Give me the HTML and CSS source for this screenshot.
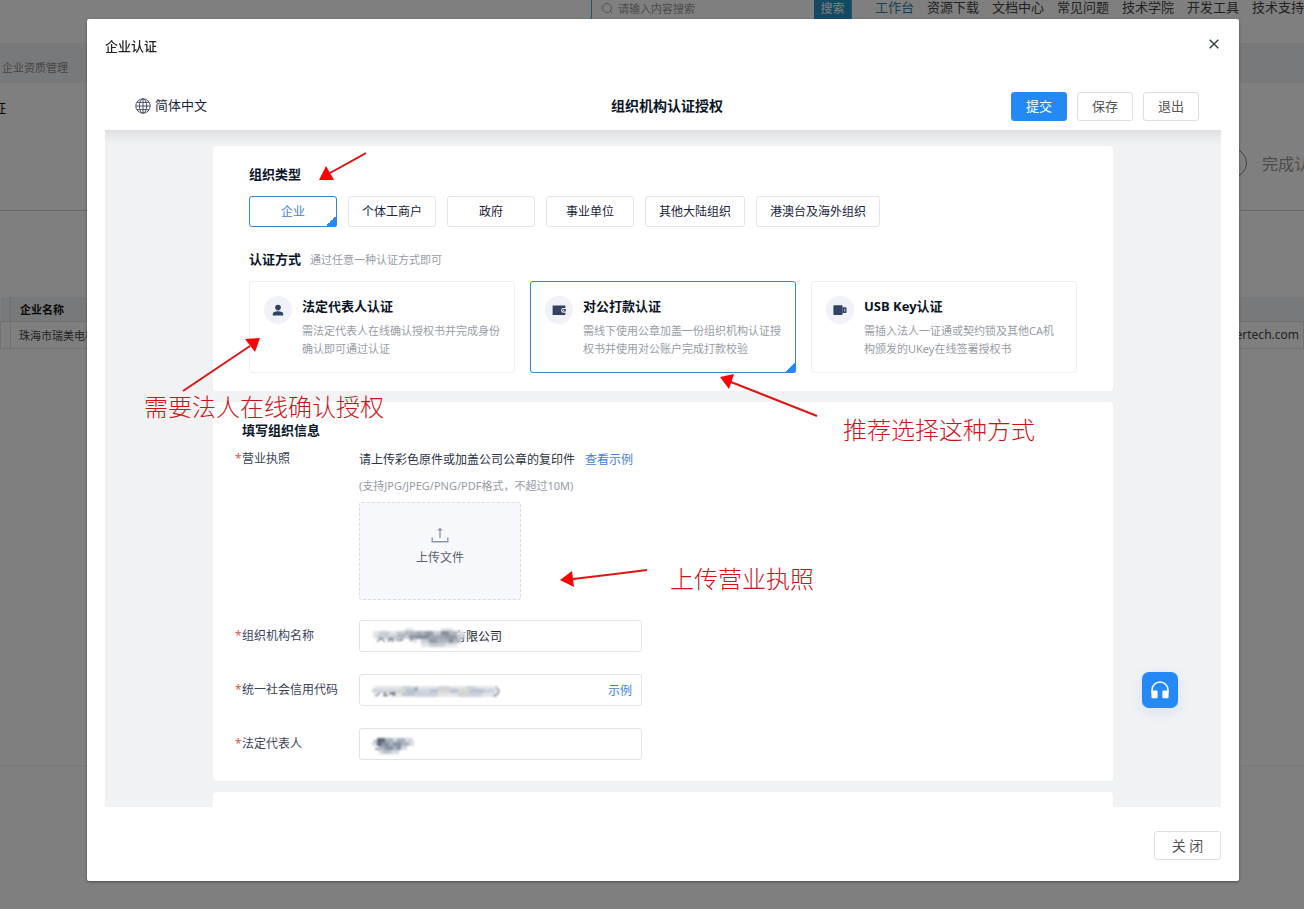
FILE: index.html
```html
<!DOCTYPE html>
<html lang="zh-CN">
<head>
<meta charset="utf-8">
<meta name="viewport" content="width=device-width, initial-scale=1">
<title>企业认证</title>
<link rel="stylesheet" href="styles.css">
</head>
<body>
<div class="page">
  <header class="site-header">
    <form class="search">
      <svg class="search-icon" viewBox="0 0 12 12" width="12" height="12" fill="none" stroke="#aaa"><circle cx="6" cy="6" r="4.5"/><path d="M9 9l2 2"/></svg>
      <input class="search-input" type="text" placeholder="请输入内容搜索" aria-label="搜索内容">
      <button class="search-btn" type="button">搜索</button>
    </form>
    <nav class="site-nav">
      <a class="nav-link nav-link-active" href="#">工作台</a>
      <a class="nav-link" href="#">资源下载</a>
      <a class="nav-link" href="#">文档中心</a>
      <a class="nav-link" href="#">常见问题</a>
      <a class="nav-link" href="#">技术学院</a>
      <a class="nav-link" href="#">开发工具</a>
      <a class="nav-link" href="#">技术支持</a>
    </nav>
  </header>
  <div class="crumbs">企业资质管理</div>
  <section class="progress">
    <h2 class="progress-title">证</h2>
    <div class="step"><span class="step-dot"></span><span>完成认证</span></div>
  </section>
  <table class="list">
    <thead><tr><th class="col-index"></th><th>企业名称</th><th></th></tr></thead>
    <tbody><tr><td class="col-index"></td><td>珠海市瑞美电机</td><td class="col-mail">nertech.com</td></tr></tbody>
  </table>
  <footer class="site-footer"></footer>
</div>

<div class="overlay">
  <div class="modal" role="dialog" aria-labelledby="modal-title">
    <header class="modal-header">
      <h1 class="modal-title" id="modal-title">企业认证</h1>
      <button class="modal-close" type="button" aria-label="关闭窗口">
        <svg viewBox="0 0 10 10" width="10" height="10" fill="none" stroke="#333a45" stroke-width="1.4"><path d="M.7.7l8.6 8.6M9.3.7L.7 9.3"/></svg>
      </button>
    </header>

    <div class="frame">
      <div class="topbar">
        <button class="lang" type="button">
          <svg viewBox="0 0 16 16" width="16" height="16" fill="none" stroke="#4a5568"><circle cx="8" cy="8" r="7.2"/><ellipse cx="8" cy="8" rx="3.6" ry="7.2"/><path d="M8 .8v14.4M.8 8h14.4M2 4.4h12M2 11.6h12"/></svg>
          <span>简体中文</span>
        </button>
        <h2 class="topbar-title">组织机构认证授权</h2>
        <div class="actions">
          <button class="btn btn-primary" type="button">提交</button>
          <button class="btn" type="button">保存</button>
          <button class="btn" type="button">退出</button>
        </div>
      </div>

      <div class="scroll">
        <form class="column">
          <section class="card card-choice">
            <h3 class="heading">组织类型</h3>
            <div class="types">
              <label class="choice type"><input class="choice-input" type="radio" name="type" checked>企业</label>
              <label class="choice type"><input class="choice-input" type="radio" name="type">个体工商户</label>
              <label class="choice type"><input class="choice-input" type="radio" name="type">政府</label>
              <label class="choice type"><input class="choice-input" type="radio" name="type">事业单位</label>
              <label class="choice type"><input class="choice-input" type="radio" name="type">其他大陆组织</label>
              <label class="choice type"><input class="choice-input" type="radio" name="type">港澳台及海外组织</label>
            </div>
            <div class="method-head">
              <h3 class="heading">认证方式</h3>
              <span class="note">通过任意一种认证方式即可</span>
            </div>
            <div class="methods">
              <label class="choice method">
                <input class="choice-input" type="radio" name="method">
                <span class="method-icon"><svg viewBox="0 0 14 14" width="14" height="14" fill="#334260"><circle cx="7" cy="4.6" r="2.8"/><path d="M1.8 12.6v-1.4c0-2 1.8-2.9 5.2-2.9s5.2.9 5.2 2.9v1.4z"/></svg></span>
                <span class="method-text"><strong class="method-name">法定代表人认证</strong><span class="method-desc">需法定代表人在线确认授权书并完成身份确认即可通过认证</span></span>
              </label>
              <label class="choice method">
                <input class="choice-input" type="radio" name="method" checked>
                <span class="method-icon"><svg viewBox="0 0 14 14" width="14" height="14"><path fill="#334260" d="M.6 2.4h12a.8.8 0 0 1 .8.8v1.9h-2a2.3 2.3 0 0 0 0 4.6h2v1.6a.8.8 0 0 1-.8.8H.6z"/><path fill="#334260" d="M11.4 6.1h2.4v2.5h-2.4a1.25 1.25 0 0 1 0-2.5z"/><circle cx="11.6" cy="7.4" r=".6" fill="#fff"/></svg></span>
                <span class="method-text"><strong class="method-name">对公打款认证</strong><span class="method-desc">需线下使用公章加盖一份组织机构认证授权书并使用对公账户完成打款校验</span></span>
              </label>
              <label class="choice method">
                <input class="choice-input" type="radio" name="method">
                <span class="method-icon"><svg viewBox="0 0 14 14" width="14" height="14"><path fill="#334260" d="M1.2 2.2h7.6a.8.8 0 0 1 .8.8v8.2a.8.8 0 0 1-.8.8H1.2a.8.8 0 0 1-.8-.8V3a.8.8 0 0 1 .8-.8z"/><path fill="#334260" d="M9.6 4.2h3.2a.7.7 0 0 1 .7.7v4.4a.7.7 0 0 1-.7.7H9.6z"/><path fill="#dfe3ec" d="M11.4 5.8h.8v2.6h-.8z"/></svg></span>
                <span class="method-text"><strong class="method-name">USB Key认证</strong><span class="method-desc">需插入法人一证通或契约锁及其他CA机构颁发的UKey在线签署授权书</span></span>
              </label>
            </div>
          </section>

          <section class="card card-info">
            <h3 class="heading info-heading">填写组织信息</h3>
            <div class="row row-upload">
              <label class="label" for="license"><span class="star">*</span>营业执照</label>
              <div class="upload-area">
                <p class="hint">请上传彩色原件或加盖公司公章的复印件<a class="link hint-link" href="#">查看示例</a></p>
                <p class="note">(支持JPG/JPEG/PNG/PDF格式，不超过10M)</p>
                <button class="upload" id="license" type="button">
                  <svg viewBox="0 0 18 18" width="18" height="18" fill="none" stroke="#8f99a8" stroke-width="1.4"><path d="M1.2 11.5v4.2h15.6v-4.2M9 12V3"/><path d="M6.2 4.6L9 1.4l2.8 3.2z" fill="#8f99a8" stroke="none"/></svg>
                  <span>上传文件</span>
                </button>
              </div>
            </div>
            <div class="row">
              <label class="label" for="org"><span class="star">*</span>组织机构名称</label>
              <div class="field">
                <input class="field-input field-input-masked" id="org" type="text" value="有限公司">
                <svg class="mask" viewBox="0 0 96 20" width="96" height="20" fill="none" stroke-width="4">
                  <path stroke="#e2e4e8" d="M1 6h16M1 10h6M17 6h8M33 3h8M69 3h12M85 6h8M49 18h8M73 18h12M41 14h4"/>
                  <path stroke="#c9ccd3" d="M7 6h10M5 10h12M25 6h8M17 10h8M33 10h4M61 6h8M49 14h8M57 18h16M85 10h8"/>
                  <path stroke="#222d40" stroke-width="1" d="M5 15l4-4M9 11l4 4M17 15v-3h4v3M24 13h5M30 10v4M38 14l4-3"/>
                  <path stroke="#b1b6c0" d="M25 9h8M33 6h12M77 6h8M65 14h12M81 14h8M49 6h4"/>
                  <path stroke="#929aa8" d="M37 10h8M53 6h8M57 14h8M73 10h12"/>
                  <path stroke="#858e9c" d="M45 10h12M69 6h8M77 14h4"/>
                  <path stroke="#a1a8b3" d="M57 10h16M45 6h4"/>
                </svg>
              </div>
            </div>
            <div class="row">
              <label class="label" for="code"><span class="star">*</span>统一社会信用代码</label>
              <div class="field">
                <input class="field-input" id="code" type="text">
                <a class="link" href="#">示例</a>
                <svg class="mask" viewBox="0 0 132 20" width="132" height="20" fill="none" stroke-width="4">
                  <path stroke="#e3e5e9" d="M2 7h120M18 14h106"/>
                  <path stroke="#ced4dd" d="M0 10h12M18 10h8M30 7h12M46 10h12M42 14h24M66 7h12M86 14h24M94 7h10M110 10h14"/>
                  <path stroke="#b9c3d0" d="M30 13h12M34 10h12M58 10h8M78 10h8M98 10h14"/>
                  <path stroke="#d9d6cc" d="M14 10h4M26 10h8M66 10h12M86 10h12"/>
                  <path stroke="#26303f" stroke-width="1" d="M3 14.500c3 0 4-1 5-3M13 10v4M11 14.500h5M17 12.500h6M22 11v4M45 6l-2 3M123 6c5 1 5 8-1 9"/>
                </svg>
              </div>
            </div>
            <div class="row">
              <label class="label" for="legal"><span class="star">*</span>法定代表人</label>
              <div class="field">
                <input class="field-input" id="legal" type="text">
                <svg class="mask" viewBox="0 0 44 20" width="44" height="20" fill="none" stroke-width="4">
                  <path stroke="#222d40" stroke-width="1" d="M3 5v5M3 14h5"/>
                  <path stroke="#d5d8de" d="M0 9h6M21 5h4M33 5h8M37 9h5M29 13h6M7 17h4M19 17h8"/>
                  <path stroke="#5b6577" d="M5 5h8M5 9h6"/>
                  <path stroke="#8790a0" d="M9 9h8M13 13h8M25 13h4M21 9h8"/>
                  <path stroke="#aab2bf" d="M13 5h8M7 13h6M17 9h4M25 5h8M29 9h8M21 13h4"/>
                  <path stroke="#bac0ca" d="M11 17h8"/>
                </svg>
              </div>
            </div>
          </section>

          <section class="card card-next"></section>

          <div class="marks">
            <svg class="arrows" viewBox="213 146 900 660" width="900" height="660" stroke="#e01414" stroke-width="2" fill="#f00">
              <path d="M366 153L330 173M183 391L250 346M817 416L731 382M647 570L573 579"/>
              <path stroke="none" d="M319 180l7-14 8 14zM260 338l-15 1 10 13zM720 377l14-3-5 15zM560 580l12-9 2 16z"/>
            </svg>
            <span class="mark mark-legal">需要法人在线确认授权</span>
            <span class="mark mark-pay">推荐选择这种方式</span>
            <span class="mark mark-license">上传营业执照</span>
          </div>
        </form>
      </div>

      <button class="support" type="button" aria-label="在线客服">
        <svg viewBox="0 0 18 18" width="18" height="18"><path d="M1.1 12V8.800a7.900 7.900 0 0 1 15.800 0V12" fill="none" stroke="#fff" stroke-width="1.5"/><path fill="#fff" d="M.4 9.600h5.200a1 1 0 0 1 1 1v5.600a1 1 0 0 1-1 1H1.400a1 1 0 0 1-1-1zM17.600 9.600h-5.200a1 1 0 0 0-1 1v5.600a1 1 0 0 0 1 1h4.200a1 1 0 0 0 1-1z"/></svg>
      </button>
    </div>

    <footer class="modal-footer">
      <button class="btn btn-close" type="button">关 闭</button>
    </footer>
  </div>
</div>
</body>
</html>
```
FILE: styles.css
```css
* { box-sizing: border-box; }

body,
button,
input {
  font-family: "Noto Sans", "Noto Sans CJK SC", sans-serif;
}

body {
  margin: 0;
  overflow: hidden;
  background: #fff;
  color: #333;
  font-size: 13px;
}

h1, h2, h3, p { margin: 0; font-size: 13px; line-height: 20px; }
a { text-decoration: none; }
button { padding: 0; border: 0; background: none; cursor: pointer; }
svg { display: block; flex: none; }

/* Page behind the dialog */
.page {
  display: flex;
  flex-direction: column;
  height: 100vh;
}

.site-header {
  display: flex;
  justify-content: flex-end;
  align-items: flex-start;
  gap: 23px;
  height: 43px;
  flex: none;
}

.search {
  display: flex;
  align-items: center;
  width: 261px;
  height: 28px;
  margin-top: -6px;
  border: 1px solid #3bb0e8;
}

.search-icon { margin: 0 5px 0 9px; }

.search-input {
  flex: 1;
  min-width: 0;
  padding: 0;
  border: 0;
  font-size: 11px;
}

.search-input::placeholder { color: #999; }

.search-btn {
  align-self: stretch;
  width: 37px;
  background: #2b93c4;
  color: #fff;
  font-size: 12px;
}

.site-nav {
  display: flex;
  gap: 13px;
}

.nav-link {
  color: #444;
  line-height: 14px;
  white-space: nowrap;
}

.nav-link-active { color: #2a87b5; }

.crumbs {
  flex: none;
  height: 40px;
  padding: 0 2px;
  background: #f0f2f5;
  color: #8a8a8a;
  font-size: 11px;
  line-height: 50px;
}

.progress {
  flex: none;
  height: 128px;
  padding-top: 15px;
  border-bottom: 1px solid #d0d0d0;
}

.progress-title {
  margin-left: -7px;
  font-weight: 400;
  color: #111;
}

.step {
  display: flex;
  justify-content: flex-end;
  align-items: center;
  gap: 15px;
  margin: 30px -22px 0 0;
  color: #999;
  font-size: 16px;
}

.step-dot {
  width: 30px;
  height: 30px;
  border: 1px solid #888;
  border-radius: 50%;
}

.list {
  width: 100%;
  margin-top: 86px;
  border-collapse: collapse;
  font-size: 11px;
  text-align: left;
  color: #444;
}

.list th {
  height: 24px;
  padding: 0 9px;
  background: #f0f2f5;
  color: #111;
}

.list td {
  height: 27px;
  padding: 0 8px;
  border: 1px solid #e0e0e0;
}

.list .col-index { width: 10px; padding: 0; border-right: 1px solid #e0e0e0; }
.list .col-mail { padding-right: 4px; text-align: right; font-size: 12px; }

.site-footer {
  height: 144px;
  flex: none;
  margin-top: auto;
  border-top: 1px solid #eee;
}

/* Dialog */
.overlay {
  position: fixed;
  inset: 0;
  display: flex;
  padding: 19px 65px 28px 87px;
  background: rgba(0, 0, 0, .5);
}

.modal {
  display: flex;
  flex: 1;
  flex-direction: column;
  min-width: 0;
  padding: 0 18px;
  border-radius: 2px;
  background: #fff;
  box-shadow: 0 1px 3px rgba(0, 0, 0, .4);
}

.modal-header {
  display: flex;
  justify-content: space-between;
  align-items: center;
  height: 63px;
  flex: none;
  padding-bottom: 9px;
}

.modal-title { font-weight: 500; color: #222; }
.modal-close { padding: 2px; margin-bottom: 4px; }

.frame {
  position: relative;
  display: flex;
  flex: 1;
  flex-direction: column;
  min-height: 0;
}

.topbar {
  display: grid;
  grid-template-columns: 1fr auto 1fr;
  align-items: center;
  flex: none;
  height: 48px;
  padding: 0 22px 0 30px;
  background: #fff;
}

.topbar-title { color: #0b1528; font-size: 14px; }

.lang {
  display: flex;
  align-items: center;
  gap: 4px;
  color: #1b2438;
  font-size: 13px;
  line-height: 16px;
}

.lang span { padding-bottom: 2px; }

.actions {
  display: flex;
  justify-content: flex-end;
  gap: 10px;
}

.btn {
  width: 56px;
  height: 29px;
  padding-bottom: 2px;
  border: 1px solid #dcdee2;
  border-radius: 3px;
  background: #fff;
  color: #555;
  font-size: 13px;
}

.btn-primary {
  border-color: #2489f5;
  background: #2489f5;
  color: #fff;
}

.scroll {
  flex: 1;
  min-height: 0;
  padding-top: 16px;
  overflow: auto;
  scrollbar-width: none;
  background: #f1f2f4;
  box-shadow: inset 0 14px 14px -10px rgba(0, 0, 0, .1);
}

.column {
  position: relative;
  display: flex;
  flex-direction: column;
  gap: 11px;
  max-width: 900px;
  margin: 0 auto;
}

.card {
  border-radius: 4px;
  background: #fff;
}

.card-choice { padding: 18px 36px; }
.card-info { padding: 18px 22px 21px; }
.card-next { height: 60px; }

.heading { color: #0b1528; }
.note { color: #989ca6; font-size: 11px; }

.types {
  display: flex;
  flex-wrap: wrap;
  gap: 11px;
  margin: 12px 0 22px;
}

.choice {
  position: relative;
  border: 1px solid #e3e5e8;
  border-radius: 3px;
  cursor: pointer;
}

.choice-input {
  position: absolute;
  margin: 0;
  opacity: 0;
}

.choice:has(:checked) {
  border-color: #3083dc;
}

.choice:has(:checked)::after {
  content: "";
  position: absolute;
  right: -1px;
  bottom: -1px;
  width: 12px;
  height: 12px;
  border-radius: 0 0 3px 0;
  background: linear-gradient(135deg, transparent 50%, #2489f5 50%);
}

.type {
  min-width: 88px;
  padding: 0 13px;
  color: #1b2438;
  font-size: 12px;
  line-height: 29px;
  text-align: center;
}

.type:has(:checked) { color: #3f82dc; }

.method-head {
  display: flex;
  align-items: center;
  gap: 9px;
  margin-bottom: 12px;
}

.methods {
  display: grid;
  grid-template-columns: repeat(3, 1fr);
  gap: 15px;
}

.method {
  display: flex;
  gap: 10px;
  min-height: 92px;
  padding: 14px 12px 14px 14px;
  border-color: #eeeff2;
}

.method-icon {
  display: flex;
  justify-content: center;
  align-items: center;
  flex: none;
  width: 28px;
  height: 28px;
  border-radius: 50%;
  background: #f1f2f8;
}

.method-text {
  display: flex;
  flex-direction: column;
  gap: 6px;
}

.method-name { color: #0b1528; line-height: 20px; }
.method-desc { color: #989ca6; font-size: 11px; line-height: 18px; }

.info-heading { padding-left: 7px; }

.row {
  display: grid;
  grid-template-columns: 124px minmax(0, 283px);
  align-items: center;
  margin-top: 22px;
}

.row-upload {
  grid-template-columns: 124px 1fr;
  align-items: start;
  margin-top: 10px;
  margin-bottom: -2px;
}

.label {
  display: flex;
  color: #3b4358;
  font-size: 12px;
  line-height: 20px;
}

.row-upload .label { line-height: 18px; }

.star { width: 7px; color: #e0574c; }

.hint { color: #2b3346; font-size: 12px; }
.upload-area .note { margin: 6px 0; }
.link { color: #3f82dc; font-size: 12px; }
.hint-link { margin-left: 10px; }

.upload {
  display: flex;
  flex-direction: column;
  justify-content: center;
  align-items: center;
  gap: 4px;
  width: 162px;
  height: 98px;
  padding-bottom: 10px;
  border: 1px dashed #d9dbe0;
  border-radius: 3px;
  background: #f7f8fc;
  color: #5a6170;
  font-size: 12px;
}

.field {
  position: relative;
  display: flex;
  align-items: center;
  height: 32px;
  padding: 0 9px;
  border: 1px solid #e1e3e7;
  border-radius: 3px;
}

.field-input {
  flex: 1;
  min-width: 0;
  padding: 0;
  border: 0;
  outline: 0;
  background: none;
  color: #1b2438;
  font-size: 12px;
}

.field-input-masked { padding-left: 85px; }

.mask {
  position: absolute;
  left: 12px;
  top: 6px;
  filter: blur(1px);
}

/* Guide marks drawn over the form */
.marks {
  position: absolute;
  inset: 0;
  pointer-events: none;
}

.arrows { overflow: visible; }

.mark {
  position: absolute;
  color: #d01218;
  font-family: "Noto Sans CJK SC", sans-serif;
  font-size: 24px;
  font-weight: 300;
  line-height: 28px;
  white-space: nowrap;
}

.mark-legal { left: -69px; top: 246px; }
.mark-pay { left: 630px; top: 269px; }
.mark-license { left: 457px; top: 418px; }

.support {
  position: absolute;
  right: 43px;
  bottom: 99px;
  display: flex;
  justify-content: center;
  align-items: center;
  width: 36px;
  height: 36px;
  border-radius: 7px;
  background: #2489f5;
  box-shadow: 0 4px 14px rgba(36, 137, 245, .14);
}

.modal-footer {
  display: flex;
  justify-content: flex-end;
  flex: none;
  padding: 24px 0 21px;
}

.btn-close { width: 67px; font-size: 14px; }
```
